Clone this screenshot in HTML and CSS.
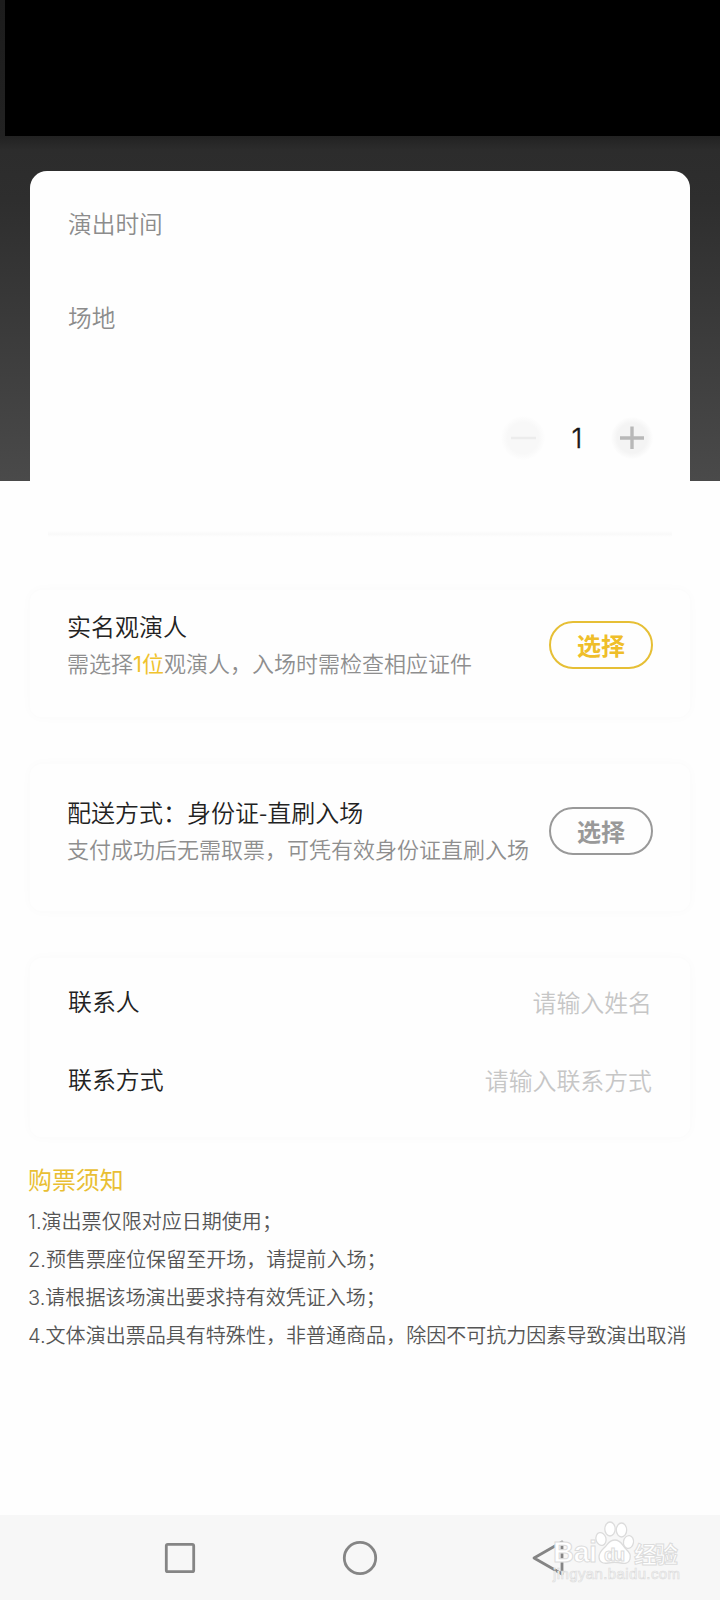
FILE: index.html
```html
<!DOCTYPE html>
<html lang="zh-CN">
<head>
<meta charset="utf-8">
<title>确认订单</title>
<link rel="stylesheet" href="styles.css">
</head>
<body>
<div class="screen">
  <header class="hero"><div class="hero-cover"></div></header>
  <main class="content">
    <section class="show">
      <div class="show-row">演出时间</div>
      <div class="show-row">场地</div>
      <div class="stepper">
        <span class="step minus"><svg width="44" height="44" viewBox="0 0 44 44"><path d="M10 22h25" stroke="#ececec" stroke-width="2.500"/></svg></span>
        <span class="count">1</span>
        <span class="step plus"><svg width="42" height="42" viewBox="0 0 42 42"><path d="M9 21h24M21 9.500v22.500" stroke="#b8b8b8" stroke-width="3.400"/></svg></span>
      </div>
      <div class="show-edge"></div>
    </section>
    <section class="panel viewer">
      <div class="info">
        <h2>实名观演人</h2>
        <p>需选择<em>1位</em>观演人，入场时需检查相应证件</p>
      </div>
      <button class="pick pick-gold">选择</button>
    </section>
    <section class="panel delivery">
      <div class="info">
        <h2>配送方式：身份证-直刷入场</h2>
        <p>支付成功后无需取票，可凭有效身份证直刷入场</p>
      </div>
      <button class="pick">选择</button>
    </section>
    <section class="panel contact">
      <div class="field"><span>联系人</span><span class="hint">请输入姓名</span></div>
      <div class="field"><span>联系方式</span><span class="hint">请输入联系方式</span></div>
    </section>
    <section class="notice">
      <h3>购票须知</h3>
      <div class="line">1.演出票仅限对应日期使用；</div>
      <div class="line">2.预售票座位保留至开场，请提前入场；</div>
      <div class="line">3.请根据该场演出要求持有效凭证入场；</div>
      <div class="line">4.文体演出票品具有特殊性，非普通商品，除因不可抗力因素导致演出取消</div>
    </section>
  </main>
  <nav class="navbar">
    <svg width="34" height="36" viewBox="0 0 34 36"><rect x="3.300" y="4.300" width="27.400" height="27.400" rx="1.500" fill="none" stroke="#858585" stroke-width="2.800"/></svg>
    <svg class="home" width="36" height="36" viewBox="0 0 36 36"><circle cx="18" cy="18" r="15.700" fill="none" stroke="#858585" stroke-width="2.800"/></svg>
    <svg width="34" height="38" viewBox="0 0 34 38"><path d="M3 19 31 3v32Z" fill="none" stroke="#858585" stroke-width="2.800" stroke-linejoin="round"/></svg>
    <svg class="watermark" width="136" height="66" viewBox="0 0 136 66">
      <g fill="#fff" stroke="#dcdcdc" stroke-width="1.300">
        <ellipse cx="51" cy="18" rx="5.200" ry="7"/>
        <ellipse cx="62.500" cy="19" rx="5.200" ry="7"/>
        <ellipse cx="42" cy="28" rx="5" ry="6.500" transform="rotate(-15 42 28)"/>
        <ellipse cx="69.500" cy="31" rx="5" ry="6.500" transform="rotate(10 69.500 31)"/>
        <path d="M56 29c6 0 7 5 11 9s5 6 4 10-5 5-9 4-8-1-13 0-9-1-9-6 3-7 6-10 4-7 10-7Z"/>
      </g>
      <g class="mark">
        <text class="wm-logo" x="-6" y="51" textLength="44">Bai</text>
        <text class="wm-du" x="45" y="50" textLength="21">du</text>
        <text class="wm-cn" x="75" y="51.500" textLength="44">经验</text>
        <text class="wm-url" x="-6" y="68" textLength="127">jingyan.baidu.com</text>
      </g>
    </svg>
  </nav>
</div>
</body>
</html>
```
FILE: styles.css
```css
* { box-sizing: border-box; }
body, h2, h3, p { margin: 0; }
body {
  font-family: "Noto Sans CJK SC", sans-serif;
  font-weight: 350;
  background: #fefefe;
}
.screen {
  width: 720px;
  height: 1600px;
  display: flex;
  flex-direction: column;
  overflow: hidden;
}
.hero {
  flex: none;
  height: 481px;
  padding-left: 5px;
  background: linear-gradient(#1c1c1c 0, #222 136px, #2c2c2c 150px, #2e2e2e 200px, #4a4a4a 481px);
}
.hero-cover {
  height: 136px;
  background: #000;
}
.content {
  flex: 1;
  margin-top: -310px;
  padding: 0 30px;
}
.show {
  height: 367px;
  padding: 31px 37px 0 38px;
  border-radius: 17px 17px 0 0;
  background: #fefefe;
}
.show-row {
  height: 94px;
  line-height: 42px;
  font-size: 23.700px;
  color: #8c8c8c;
}
.stepper {
  display: flex;
  align-items: center;
  justify-content: flex-end;
  margin-top: 26px;
  height: 44px;
}
.step {
  display: grid;
  place-items: center;
  border-radius: 50%;
}
.minus { background: radial-gradient(#f8f8f8 50%, #fefefe 72%); }
.plus { background: radial-gradient(#f4f4f4 50%, #fefefe 72%); }
.count {
  width: 66px;
  padding-right: 2px;
  text-align: center;
  font: 300 27.500px/42px Inter, sans-serif;
  -webkit-text-stroke: .4px #151515;
  color: #151515;
}
.show-edge {
  height: 6px;
  margin: 71px -19px 0 -20px;
  background: linear-gradient(#fefefe, #f9f9f9, #fefefe);
}
.panel {
  border-radius: 12px;
  box-shadow: 0 0 12px rgba(0, 0, 0, .025);
  padding: 0 37px 0 38px;
}
.viewer, .delivery {
  display: flex;
  justify-content: space-between;
}
.viewer { height: 127px; margin-top: 52px; padding-top: 19px; }
.delivery { height: 147px; margin-top: 47px; padding-top: 31px; }
.info { white-space: nowrap; margin: -1px 0 0 -1px; }
.info h2 {
  font-size: 24px;
  line-height: 36px;
  font-weight: 350;
  color: #222;
}
.info p {
  font-size: 22px;
  line-height: 36px;
  color: #8e8e8e;
}
.info em {
  font-family: Inter, "Noto Sans CJK SC", sans-serif;
  font-style: normal;
  font-weight: 400;
  color: #f0c32e;
}
.pick {
  flex: none;
  width: 104px;
  height: 48px;
  margin-top: 12px;
  padding: 0;
  border: 2px solid #999;
  border-radius: 24px;
  background: none;
  font: 700 24px/42px "Noto Sans CJK SC", sans-serif;
  color: #999;
}
.pick-gold { border-color: #e6bf35; color: #efbe2a; }
.contact {
  margin-top: 47px;
  height: 179px;
  padding-top: 23px;
}
.field {
  display: flex;
  justify-content: space-between;
  height: 77.500px;
  line-height: 40px;
  font-size: 23.900px;
  color: #222;
}
.hint { color: #c6c6c6; padding-top: 1px; margin-right: 1px; }
.notice {
  margin: 22px -2px 0;
  white-space: nowrap;
}
.notice h3 {
  font-size: 23.900px;
  line-height: 40px;
  font-weight: 400;
  color: #e9bf33;
}
.line {
  font-family: Inter, "Noto Sans CJK SC", sans-serif;
  font-size: 20.050px;
  line-height: 38px;
  color: #555;
}
.notice h3 + .line { margin-top: 4px; }
.navbar {
  position: relative;
  flex: none;
  display: flex;
  justify-content: space-between;
  align-items: center;
  height: 85px;
  padding: 0 155px 0 163px;
  background: #f7f7f7;
}
.home { margin-right: 8px; }
.watermark {
  position: absolute;
  left: 559px;
  top: -4px;
  overflow: visible;
}
.mark text {
  fill: #fff;
  stroke: #dcdcdc;
  stroke-width: 1px;
}
.wm-logo { font: 700 29px "Liberation Sans", sans-serif; }
.wm-du { font: 700 19px "Liberation Sans", sans-serif; }
.wm-cn { font: 700 23px "Noto Sans CJK SC", sans-serif; }
.mark .wm-url { font: 400 15px "Liberation Sans", sans-serif; stroke-width: .7px; }
```
